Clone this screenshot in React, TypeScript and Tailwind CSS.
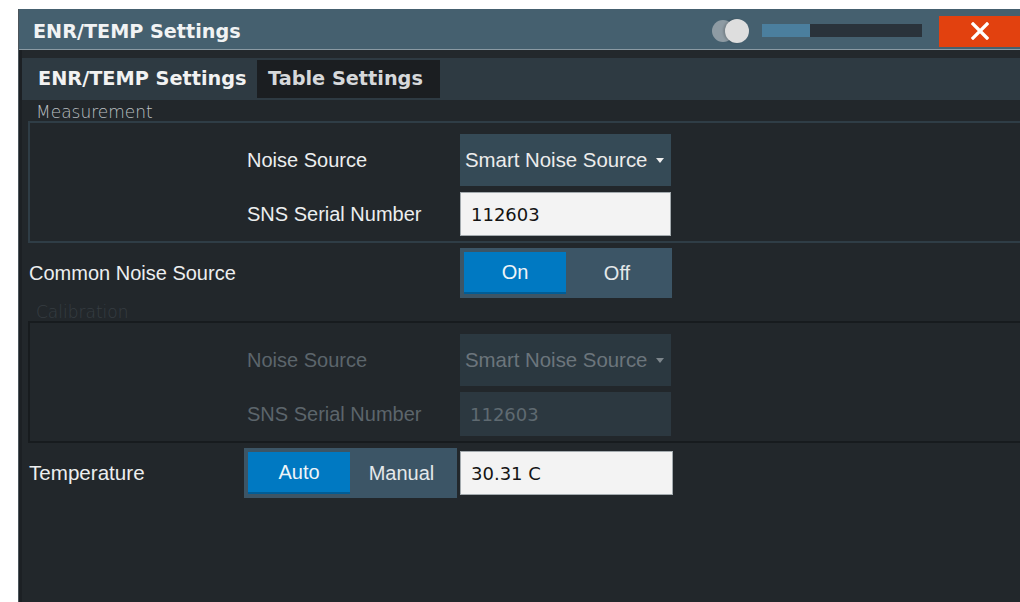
import type { ReactNode } from 'react'

// Dialogo ENR/TEMP: barra de título, abas e dois grupos (Medição / Calibração)
// com os controles do noise source e da temperatura.

const labelFont = "font-['Liberation_Sans',Arial,sans-serif]"
const boldFont = "font-['DejaVu_Sans',Verdana,sans-serif] font-bold"
const fieldFont = "font-['DejaVu_Sans',Verdana,sans-serif]"

function TitleBar() {
  return (
    <div className="h-[41px] shrink-0 flex items-center bg-[#45606f] border-b border-[#8a9aa3]">
      <span className={`${boldFont} text-[19.2px] text-[#f1f3f4] pl-[14px] pt-[7px] flex-1`}>ENR/TEMP Settings</span>
      {/* indicador de transparência */}
      <div className="relative w-[37px] h-[24px] mt-[3px] mr-[13px]">
        <span className="absolute left-0 top-[1px] w-[22px] h-[22px] rounded-full bg-[#8e9ba3]" />
        <span className="absolute left-[13px] top-0 w-[24px] h-[24px] rounded-full bg-[#dedede] shadow-[-2px_0_2px_rgba(0,0,0,0.15)]" />
      </div>
      <div className="w-[160px] h-[13px] mt-[2px] flex bg-[#2a333b] mr-[17px]">
        <div className="w-[48px] h-full bg-[#4b7f9e]" />
      </div>
      <button className="w-[81px] h-[31px] mt-[4px] bg-[#e2410f] flex items-center justify-center">
        <svg width="18" height="18" viewBox="0 0 18 18">
          <path d="M2 2 L16 16 M16 2 L2 16" stroke="#fff" strokeWidth="3.3" strokeLinecap="square" />
        </svg>
      </button>
    </div>
  )
}

function Tabs() {
  return (
    <div className="h-[42px] shrink-0 flex bg-[#2e3a42]">
      <div className={`${boldFont} w-[235px] h-[38px] mt-[2px] pl-[16px] flex items-center text-[19.3px] text-[#f2f2f2]`}>
        ENR/TEMP Settings
      </div>
      <div className={`${boldFont} w-[183px] h-[38px] mt-[2px] pl-[11px] flex items-center text-[19.3px] text-[#d6d8da] bg-[#1b1e21]`}>
        Table Settings
      </div>
    </div>
  )
}

function Caret({ dim }: { dim?: boolean }) {
  return (
    <svg width="8" height="5" viewBox="0 0 8 5" className="shrink-0">
      <path d="M0 0 H8 L4 5 Z" fill={dim ? '#7d868c' : '#f0f0f0'} />
    </svg>
  )
}

function Dropdown({ dim }: { dim?: boolean }) {
  return (
    <div
      className={`w-[211px] h-[52px] flex items-center justify-between pl-[5px] pr-[7px] text-[20.4px] ${
        dim ? 'bg-[#2b3840] text-[#6b757c]' : 'bg-[#354a56] text-[#ececec]'
      }`}
    >
      <span>Smart Noise Source</span>
      <Caret dim={dim} />
    </div>
  )
}

function Field({ value, dim, w = 'w-[211px]' }: { value: string; dim?: boolean; w?: string }) {
  return (
    <div
      className={`${w} h-[44px] flex items-center pl-[10px] text-[18px] ${fieldFont} ${
        dim ? 'bg-[#2c3840] text-[#5f6a71]' : 'bg-[#f3f3f3] text-[#141414] border border-[#a3aaae]'
      }`}
    >
      {value}
    </div>
  )
}

function Toggle({ left, right, w }: { left: string; right: string; w: string }) {
  return (
    <div className={`${w} h-[50px] flex p-[4px] bg-[#3c5566] text-[20px]`}>
      <div className="w-[102px] h-full flex items-center justify-center bg-[#0079c2] border-b-2 border-[#005d97] text-[#eef4f8]">
        {left}
      </div>
      <div className="flex-1 flex items-center justify-center text-[#e4e8ea]">{right}</div>
    </div>
  )
}

function GroupTitle({ children, dim }: { children: ReactNode; dim?: boolean }) {
  return (
    <div
      className={`${fieldFont} font-light text-[17px] pl-[14px] flex items-center ${
        dim ? 'h-[23px] pt-[6px] text-[#363d42]' : 'h-[21px] pt-[5px] text-[#bcc0c4]'
      }`}
    >
      {children}
    </div>
  )
}

function Group({ dim }: { dim?: boolean }) {
  const label = dim ? 'text-[#5c656b]' : 'text-[#eceeef]'
  return (
    <div
      className={`ml-[6px] border-2 border-r-0 pt-[11px] pb-[5px] pl-[217px] grid grid-cols-[213px_211px] gap-y-[6px] items-center text-[20px] ${
        dim ? 'border-[#171b1e]' : 'border-[#2f3d46]'
      }`}
    >
      <span className={label}>Noise Source</span>
      <Dropdown dim={dim} />
      <span className={label}>SNS Serial Number</span>
      <Field value="112603" dim={dim} />
    </div>
  )
}

export default function App() {
  return (
    <div className={`w-[1020px] h-[602px] bg-white pt-[9px] pl-[18px] overflow-hidden ${labelFont}`}>
      <div className="h-full flex flex-col bg-[#22272b] border-l border-[#4b545a]">
        <TitleBar />
        <div className="flex-1 flex flex-col border-l-[3px] border-[#1c2024]">
          <div className="h-[8px] shrink-0 bg-[#23282c]" />
          <Tabs />

          <GroupTitle>Measurement</GroupTitle>
          <Group />

          <div className="mt-[5px] flex items-center">
            <span className="w-[438px] pl-[7px] text-[20px] text-[#eceeef]">Common Noise Source</span>
            <Toggle left="On" right="Off" w="w-[212px]" />
          </div>

          <GroupTitle dim>Calibration</GroupTitle>
          <Group dim />

          <div className="mt-[5px] flex items-center">
            <span className="w-[222px] pl-[7px] text-[20.6px] text-[#eceeef]">Temperature</span>
            <Toggle left="Auto" right="Manual" w="w-[213px]" />
            <div className="ml-[3px]">
              <Field value="30.31 C" w="w-[213px]" />
            </div>
          </div>
        </div>
      </div>
    </div>
  )
}
